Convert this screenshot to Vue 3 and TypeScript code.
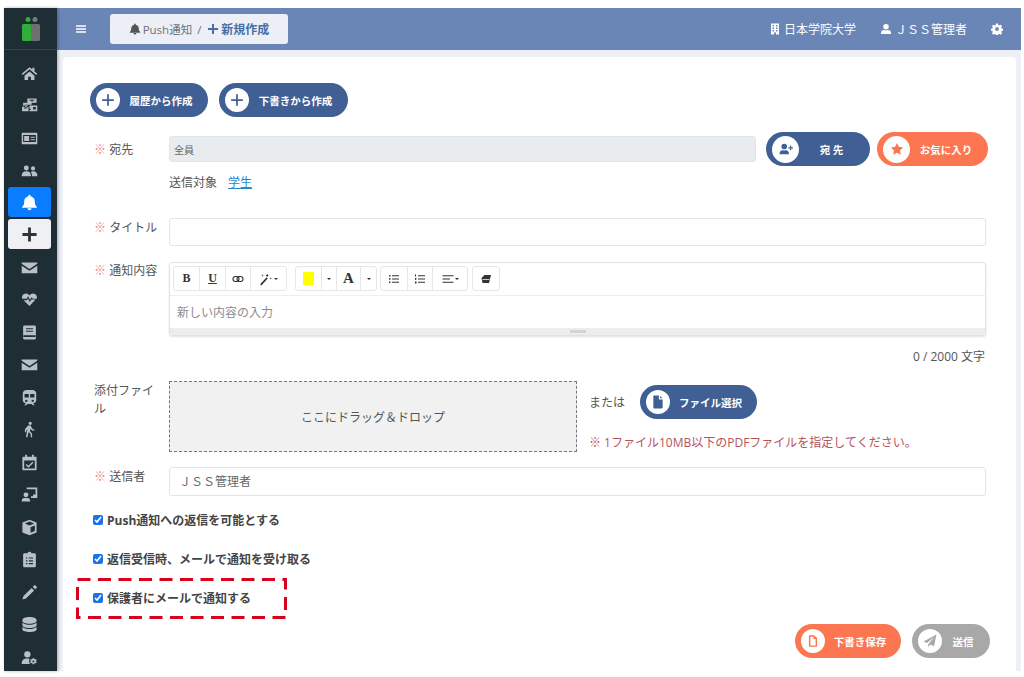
<script setup lang="ts">
const I: Record<string, string> = {
  home: 'M12 3 1 12.5l1.4 1.7L12 6l9.6 8.2 1.4-1.7-4-3.4V4h-3v2.5zM5 15v6h5v-4.5h4V21h5v-6l-7-6z',
  bulk: 'M9 2h13v6H9zM11 4l4.500 2.500L20 4zM3 8h12v3H6v4H3zM2 12h8l-4 3zM1.500 13.500 6 17l4.500-3.500V20h-9zM12 12h11v8H12v-2h2v-1.500h-2zM17 14v3.500h4V14z',
  card: 'M2 4h20a1 1 0 0 1 1 1v14a1 1 0 0 1-1 1H2a1 1 0 0 1-1-1V5a1 1 0 0 1 1-1zm1 3v10h18V7zm1.500 1.500h7v7h-7zm9 1h6V11h-6zm0 3.500h6v1.500h-6z',
  users: 'M7.500 5a3.500 3.500 0 1 1 0 7 3.500 3.500 0 0 1 0-7zM17 6a3 3 0 1 1 0 6 3 3 0 0 1 0-6zM1 19c0-4 2.500-6 6.500-6s6.500 2 6.500 6v1H1zM15.500 20v-1c0-2-.6-3.700-1.800-5 1-.6 2-.9 3.300-.9 3.700 0 6 1.900 6 5.400V20z',
  mail: 'M1 5h22v1.800L12 14 1 6.800zM1 9.500l11 7 11-7V20H1z',
  heart: 'M12 21 3.500 13h4.800l1.500-2.500 2.600 5 2.300-3.500h5.800zM1.800 11C.5 7.500 3 3.500 7 3.500c2 0 3.800 1 5 2.800 1.200-1.800 3-2.800 5-2.800 4 0 6.500 4 5.200 7.500h-5.500l-1.500-2.200-2.500 3.700-2.700-5L8 11z',
  book: 'M5 2h14a2 2 0 0 1 2 2v16a2 2 0 0 1-2 2H5a2 2 0 0 1-2-2V4a2 2 0 0 1 2-2zm2 4v1.500h10V6zm0 3.500V11h10V9.500zM3.500 16v2.500h17V16z',
  subway: 'M8 1.500h8c3 0 5.500 2 5.500 4.500v10c0 2.300-2 4-4.500 4.300l2.500 2.700h-3L15 21H9l-1.500 2h-3L7 20.300C4.500 20 2.500 18.300 2.500 16V6c0-2.500 2.500-4.500 5.500-4.500zM5 7v5h6V7zm8 0v5h6V7zM7.500 15a1.700 1.700 0 1 0 0 3.400 1.700 1.700 0 0 0 0-3.400zm9 0a1.700 1.700 0 1 0 0 3.400 1.700 1.700 0 0 0 0-3.400z',
  walk: 'M13 1a2.300 2.300 0 1 1 0 4.600A2.300 2.300 0 0 1 13 1zM10 6.500h3.500l2.500 4.500 3 1.500-.9 1.700-3.600-1.700-1-1.700-.8 3.700 3 3.500V23h-2v-4.500l-3-3L9 23H7l2-11-1.500.9V16h-2v-4.300z',
  cal: 'M6 1h2.500v3h7V1H18v3h3a1 1 0 0 1 1 1v17a1 1 0 0 1-1 1H3a1 1 0 0 1-1-1V5a1 1 0 0 1 1-1h3zM4.500 9v11.500h15V9zM16 11l1.500 1.500-7 7-4-4L8 14l2.500 2.500z',
  teach: 'M8 2h15v15h-9v-2.500h3V12h3.500V4.500H8zM7 9a3.500 3.500 0 1 1 0 7 3.500 3.500 0 0 1 0-7zM1 22c0-3.500 1.500-5 3.500-5h5c2 0 3.500 1.500 3.500 5z',
  cube: 'M12 1 22 5v14l-10 4-10-4V5zM5.500 6.300 12 9l6.500-2.700L12 3.700zM13.500 11.500v8l6-2.400v-8z',
  clip: 'M12 1a3 3 0 0 1 2.800 2H19a2 2 0 0 1 2 2v16a2 2 0 0 1-2 2H5a2 2 0 0 1-2-2V5a2 2 0 0 1 2-2h4.200A3 3 0 0 1 12 1zM7 9v1.700h2V9zm4 0v1.700h6V9zm-4 4v1.700h2V13zm4 0v1.700h6V13zm-4 4v1.700h2V17zm4 0v1.700h6V17z',
  pencil: 'M15 5.500 18.500 9 7 20.500 2 22l1.500-5zM16.500 4l2-2a1.500 1.500 0 0 1 2 0l1.500 1.500a1.500 1.500 0 0 1 0 2l-2 2z',
  db: 'M12 1.500c5.500 0 10 1.700 10 4v1.500c0 2.300-4.500 4-10 4S2 9.300 2 7V5.500c0-2.300 4.500-4 10-4zM2 9.500c2 1.800 6 3 10 3s8-1.200 10-3V13c0 2.300-4.500 4-10 4S2 15.300 2 13zM2 15.500c2 1.800 6 3 10 3s8-1.200 10-3V19c0 2.300-4.500 3.500-10 3.500S2 21.300 2 19z',
  ucog: 'M9 3a4.500 4.500 0 1 1 0 9 4.500 4.500 0 0 1 0-9zM1 21c0-5 2.500-7.500 8-7.500 1.200 0 2.200.1 3 .4-.6 1.700-.6 5.400.6 7.100H2zM18.500 13l1 1.600 1.800-.3.9 1.500-1.200 1.400 1.200 1.400-.9 1.500-1.800-.3-1 1.700h-2l-.8-1.700-1.900.3-.9-1.500 1.200-1.400-1.200-1.400.9-1.500 1.900.3.800-1.600zm-1 3.400a1.400 1.400 0 1 0 0 2.800 1.400 1.400 0 0 0 0-2.800z',
  bell: 'M12 23a2.800 2.800 0 0 0 2.800-3H9.200A2.800 2.800 0 0 0 12 23zM13.500 3.300V2.500a1.500 1.500 0 0 0-3 0v.8C7 4 4.500 7 4.500 10.500c0 5-1.700 6.400-2.800 7.500-.9 1 0 1.500.8 1.500h19c.8 0 1.700-.5.800-1.500-1.100-1.100-2.800-2.500-2.800-7.500 0-3.500-2.500-6.500-6-7.200z',
  plus: 'M10 2h4v8h8v4h-8v8h-4v-8H2v-4h8z',
  plusThin: 'M10.500 2h3v8.500H22v3h-8.500V22h-3v-8.500H2v-3h8.500z',
  bars: 'M2 4.500h20v3.200H2zM2 10.400h20v3.200H2zM2 16.300h20v3.200H2z',
  building: 'M4 1h16v22h-6v-4h-4v4H4zM7 4v3h3V4zm7 0v3h3V4zM7 9v3h3V9zm7 0v3h3V9zM7 14v3h3v-3zm7 0v3h3v-3z',
  user: 'M12 2a5.500 5.500 0 1 1 0 11 5.500 5.500 0 0 1 0-11zM2 22v-2c0-3.500 2.500-6 5.500-6h1c1 .6 2.200 1 3.500 1s2.500-.4 3.500-1h1c3 0 5.500 2.500 5.500 6v2z',
  cog: 'M10 1h4l.6 3 2 .9 2.700-1.600 2.800 2.800-1.700 2.600.9 2.100 3 .6v4l-3 .6-.9 2.100 1.700 2.600-2.800 2.800-2.700-1.700-2 .9-.6 3h-4l-.6-3-2-.9-2.700 1.700-2.800-2.800 1.700-2.600-.9-2.100-3-.6v-4l3-.6.9-2.100-1.700-2.600L4.700 3.300l2.700 1.600 2-.9zM12 8.200a3.800 3.800 0 1 0 0 7.600 3.800 3.800 0 0 0 0-7.600z',
  uplus: 'M9 3a4.800 4.800 0 1 1 0 9.600A4.800 4.800 0 0 1 9 3zM1 21v-1.500c0-3 2.200-5.500 5-5.500h.7c.7.400 1.500.6 2.300.6s1.600-.2 2.300-.6h.7c2.800 0 5 2.500 5 5.500V21zM19 6h2v3h3v2h-3v3h-2v-3h-3V9h3z',
  star: 'M12 1.500l3.200 6.800 7.300 1-5.300 5.100 1.300 7.400L12 18.300l-6.500 3.500 1.300-7.400L1.500 9.300l7.300-1z',
  file: 'M5 1h8.500v6.500H20V21a2 2 0 0 1-2 2H5a1 1 0 0 1-1-1V2a1 1 0 0 1 1-1zM15.500 1.500 19.500 5.500h-4z',
  fileo: 'M6 2h8l5 5v14a1 1 0 0 1-1 1H6a1 1 0 0 1-1-1V3a1 1 0 0 1 1-1zm1.500 2.500v15h9v-11H13V4.500z',
  send: 'M23 1 19 21l-6.500-3L9 22.500V17.500L19 5.500 6.500 15.500 1 13z',
}
const navTop = ['home', 'bulk', 'card', 'users']
const navBottom = ['mail', 'heart', 'book', 'mail', 'subway', 'walk', 'cal', 'teach', 'cube', 'clip', 'pencil', 'db', 'ucog']
const checks = ['Push通知への返信を可能とする', '返信受信時、メールで通知を受け取る']
</script>

<template>
  <div class="page">
    <aside class="side">
      <div class="logo">
        <svg width="18" height="24" viewBox="0 0 18 24">
          <circle cx="6" cy="2.500" r="2.500" fill="#2fae3c" />
          <circle cx="13" cy="2.500" r="2.500" fill="#7a7a7a" />
          <rect x="0" y="7" width="10" height="17" rx="1.500" fill="#2fae3c" />
          <rect x="9" y="7" width="9" height="17" rx="1.500" fill="#6f6f6f" />
        </svg>
      </div>
      <nav class="nav">
        <div v-for="(n, i) in navTop" :key="'t' + i" class="nav-item">
          <svg class="ni" viewBox="0 0 24 24"><path :d="I[n]" fill-rule="evenodd" /></svg>
        </div>
        <div class="nav-item active">
          <svg class="ni" viewBox="0 0 24 24"><path :d="I.bell" /></svg>
        </div>
        <div class="nav-item current">
          <svg class="ni" viewBox="0 0 24 24"><path :d="I.plus" /></svg>
        </div>
        <div v-for="(n, i) in navBottom" :key="'b' + i" class="nav-item">
          <svg class="ni" viewBox="0 0 24 24"><path :d="I[n]" fill-rule="evenodd" /></svg>
        </div>
      </nav>
    </aside>

    <div class="main">
      <header class="top">
        <svg class="bars" viewBox="0 0 24 24"><path :d="I.bars" /></svg>
        <div class="crumb">
          <svg class="ci" viewBox="0 0 24 24"><path :d="I.bell" /></svg>
          <span>Push通知</span>
          <span class="slash">/</span>
          <svg class="ci blue" viewBox="0 0 24 24"><path :d="I.plus" /></svg>
          <b>新規作成</b>
        </div>
        <div class="top-right">
          <span class="ti"><svg viewBox="0 0 24 24"><path :d="I.building" fill-rule="evenodd" /></svg>日本学院大学</span>
          <span class="ti admin"><svg viewBox="0 0 24 24"><path :d="I.user" /></svg>ＪＳＳ管理者</span>
          <svg class="cog" viewBox="0 0 24 24"><path :d="I.cog" fill-rule="evenodd" /></svg>
        </div>
      </header>

      <main class="card">
        <div class="create-row">
          <button class="pill navy w118"><i class="dot"><svg viewBox="0 0 24 24"><path :d="I.plusThin" /></svg></i><span>履歴から作成</span></button>
          <button class="pill navy w129"><i class="dot"><svg viewBox="0 0 24 24"><path :d="I.plusThin" /></svg></i><span>下書きから作成</span></button>
        </div>

        <div class="row r-dest">
          <label class="lb"><em>※</em> 宛先</label>
          <div class="input disabled">全員</div>
          <button class="pill navy w104 wide"><i class="dot"><svg viewBox="0 0 24 24"><path :d="I.uplus" /></svg></i><span>宛 先</span></button>
          <button class="pill orange w111 wide"><i class="dot"><svg viewBox="0 0 24 24"><path :d="I.star" /></svg></i><span>お気に入り</span></button>
        </div>
        <div class="target">送信対象<a>学生</a></div>

        <div class="row r-title">
          <label class="lb"><em>※</em> タイトル</label>
          <div class="input tall"></div>
        </div>

        <div class="row r-body">
          <label class="lb"><em>※</em> 通知内容</label>
          <div class="editor">
            <div class="toolbar">
              <div class="grp">
                <span class="tb w25 serif">B</span>
                <span class="tb w26 serif u">U</span>
                <span class="tb w25">
                  <svg class="ti12" viewBox="0 0 24 24" fill="none" stroke="#333" stroke-width="2.200"><rect x="2" y="7" width="12" height="10" rx="5" /><rect x="10" y="7" width="12" height="10" rx="5" /></svg>
                </span>
                <span class="tb w36">
                  <svg class="ti14" viewBox="0 0 24 24"><path d="M2 21 13 9l2 2L4 23zM14 3l1 2 2 1-2 1-1 2-1-2-2-1 2-1zM20 9l.7 1.500 1.300.5-1.300.5L20 13l-.7-1.500L18 11l1.300-.5zM6 4l.7 1.500L8 6l-1.300.5L6 8l-.7-1.500L4 6l1.300-.5z" fill="#333" /></svg><i class="caret"></i>
                </span>
              </div>
              <div class="grp">
                <span class="tb w25"><i class="swatch"></i></span>
                <span class="tb w15"><i class="caret"></i></span>
                <span class="tb w24 serif big">A</span>
                <span class="tb w16"><i class="caret"></i></span>
              </div>
              <div class="grp g3">
                <span class="tb w26"><svg class="ti12" viewBox="0 0 24 24"><path d="M2 4h3v3H2zM8 4.500h14v2H8zM2 10.500h3v3H2zM8 11h14v2H8zM2 17h3v3H2zM8 17.500h14v2H8z" fill="#333" /></svg></span>
                <span class="tb w25"><svg class="ti12" viewBox="0 0 24 24"><path d="M2 3h2v4H2zM2 10h3v1.500H3.500V13H5v1H2zM2 17h3v4H2zM8 4.500h14v2H8zM8 11h14v2H8zM8 17.500h14v2H8z" fill="#333" /></svg></span>
                <span class="tb w35"><svg class="ti12" viewBox="0 0 24 24"><path d="M1 4.500h22v2.200H1zM1 11h15v2.200H1zM1 17.500h22v2.200H1z" fill="#333" /></svg><i class="caret"></i></span>
              </div>
              <div class="grp g4">
                <span class="tb w26"><svg class="ti12" viewBox="0 0 24 24"><path d="M9 4h13l-4 16H5L3 10z" fill="#333" /><path d="M5 13h14" stroke="#fff" stroke-width="1.500" /></svg></span>
              </div>
            </div>
            <div class="ph">新しい内容の入力</div>
            <div class="resize"><i></i></div>
          </div>
        </div>
        <div class="count">0 / 2000 文字</div>

        <div class="row r-file">
          <label class="lb attach">添付ファイル</label>
          <div class="drop">ここにドラッグ＆ドロップ</div>
          <div class="file-side">
            <div class="file-pick">
              <span class="or">または</span>
              <button class="pill navy w117"><i class="dot"><svg viewBox="0 0 24 24"><path :d="I.file" fill-rule="evenodd" /></svg></i><span>ファイル選択</span></button>
            </div>
            <p class="warn">※ 1ファイル10MB以下のPDFファイルを指定してください。</p>
          </div>
        </div>

        <div class="row r-sender">
          <label class="lb"><em>※</em> 送信者</label>
          <div class="input tall val">ＪＳＳ管理者</div>
        </div>

        <label v-for="c in checks" :key="c" class="chk"><input type="checkbox" checked />{{ c }}</label>
        <label class="chk marked">
          <input type="checkbox" checked />保護者にメールで通知する
          <svg class="mark" width="212" height="41" viewBox="0 0 212 41" fill="none">
            <rect x="1.500" y="1.500" width="208" height="38" stroke="#d9001b" stroke-width="3" stroke-dasharray="13 7.500" />
          </svg>
        </label>

        <div class="actions">
          <button class="pill orange w106"><i class="dot"><svg viewBox="0 0 24 24"><path :d="I.fileo" fill-rule="evenodd" /></svg></i><span>下書き保存</span></button>
          <button class="pill gray w78"><i class="dot"><svg viewBox="0 0 24 24"><path :d="I.send" /></svg></i><span>送信</span></button>
        </div>
      </main>
    </div>
  </div>
</template>

<style>
html, body { margin: 0; background: #fff; }
</style>

<style scoped>
.page {
  box-sizing: border-box;
  width: 1024px;
  height: 677px;
  padding: 8px 3px 6px 4px;
  display: flex;
  overflow: hidden;
  font-family: "Open Sans", "Noto Sans CJK JP", sans-serif;
  color: #555;
}
.side {
  width: 53px;
  flex: none;
  background: #1f2d34;
  display: flex;
  flex-direction: column;
  box-shadow: 1px 0 3px rgba(0, 0, 0, .3);
  position: relative;
  overflow: hidden;
}
.logo {
  height: 42px;
  flex: none;
  border-bottom: 1px solid #33424a;
  box-sizing: border-box;
  display: flex;
  align-items: center;
  justify-content: center;
}
.nav {
  flex: none;
  padding: 7px 0 0 4px;
  display: flex;
  flex-direction: column;
}
.nav-item {
  width: 43px;
  height: 32.500px;
  flex: none;
  display: flex;
  align-items: center;
  justify-content: center;
  color: #b9c0c4;
}
.ni { width: 17px; height: 17px; fill: currentColor; }
.nav-item.active {
  background: #0a7cff;
  color: #fff;
  border-radius: 3px;
  height: 30px;
  margin-bottom: 2px;
}
.nav-item.current {
  background: #eef0f3;
  color: #333;
  border-radius: 3px;
  height: 30px;
  margin-bottom: 2px;
}
.main {
  flex: 1;
  min-width: 0;
  background: #edf0f7;
  display: flex;
  flex-direction: column;
}
.top {
  height: 42px;
  flex: none;
  background: #6a86b6;
  display: flex;
  align-items: center;
  padding: 0 18px 0 18px;
  color: #fff;
}
.bars { width: 12px; height: 12px; fill: #fff; }
.crumb {
  margin-left: 23px;
  width: 178px;
  height: 30px;
  box-sizing: border-box;
  background: #eceff5;
  border-radius: 3px;
  display: flex;
  align-items: center;
  justify-content: center;
  font-size: 11.500px;
  color: #6b7480;
  gap: 2px;
}
.crumb b { color: #4a6fa5; font-weight: 700; font-size: 12px; }
.slash { margin: 0 4px 0 3px; }
.ci { width: 12px; height: 12px; fill: #555; }
.ci.blue { fill: #4a6fa5; }
.top-right {
  margin-left: auto;
  display: flex;
  align-items: center;
  font-size: 12px;
}
.ti { display: flex; align-items: center; gap: 3px; }
.ti svg { width: 12px; height: 12px; fill: #fff; }
.admin { margin-left: 24px; gap: 3px; }
.cog { width: 12px; height: 12px; fill: #fff; margin-left: 24px; }
.card {
  flex: 1;
  margin: 7px 5px 0 6px;
  background: #fff;
  border-radius: 4px 4px 0 0;
  padding: 26px 30px 0 27px;
  min-height: 0;
}
.create-row { display: flex; gap: 11px; }
.pill {
  height: 34px;
  flex: none;
  border: 0;
  border-radius: 17px;
  padding: 0 0 0 6px;
  display: flex;
  align-items: center;
  color: #fff;
  font: 700 10.500px "Noto Sans CJK JP", sans-serif;
}
.pill span { flex: 1; text-align: center; padding-right: 6px; }
.navy { background: #3f5f95; }
.orange { background: #fc7651; }
.gray { background: #a8a8a8; }
.w118 { width: 118px; } .w129 { width: 129px; }
.w104 { width: 104px; } .w111 { width: 111px; }
.w117 { width: 117px; } .w106 { width: 106px; } .w78 { width: 78px; }
.dot {
  width: 24px;
  height: 24px;
  flex: none;
  border-radius: 50%;
  background: #fff;
  display: flex;
  align-items: center;
  justify-content: center;
}
.wide .dot { width: 27px; height: 27px; }
.dot svg { width: 14px; height: 14px; }
.navy .dot svg { fill: #3f5f95; }
.orange .dot svg { fill: #fc7651; }
.gray .dot svg { fill: #a8a8a8; }
.row { display: flex; align-items: flex-start; }
.lb {
  width: 75px;
  margin-left: 4px;
  flex: none;
  font-size: 12px;
  line-height: 18px;
  color: #555;
}
.lb em { font-style: normal; color: #e8877c; }
.r-dest { margin-top: 15px; height: 34px; }
.r-dest .lb { padding-top: 9px; }
.input {
  box-sizing: border-box;
  flex: 1;
  border: 1px solid #e1e5ea;
  border-radius: 3px;
  background: #fff;
  font-size: 10px;
  color: #666;
  display: flex;
  align-items: center;
  padding-left: 4px;
}
.disabled {
  height: 26px;
  margin: 4px 10px 0 0;
  background: #e9ecef;
}
.r-dest .pill + .pill { margin-left: 7px; }
.r-dest .orange { margin-right: -2px; }
.target { margin: 8px 0 0 79px; font-size: 12px; line-height: 18px; color: #555; }
.target a { margin-left: 11px; color: #2a86c8; text-decoration: underline; }
.r-title { margin-top: 26px; }
.r-title .lb, .r-sender .lb { padding-top: 1px; }
.tall { height: 28px; }
.r-body { margin-top: 16px; }
.editor {
  flex: 1;
  height: 74px;
  box-sizing: border-box;
  border: 1px solid #dfe3e8;
  border-radius: 3px;
  box-shadow: 0 1px 2px rgba(0, 0, 0, .12);
  display: flex;
  flex-direction: column;
  overflow: hidden;
}
.toolbar {
  height: 33px;
  box-sizing: border-box;
  flex: none;
  padding: 3px 0 0 3px;
  border-bottom: 1px solid #eee;
  display: flex;
  gap: 8px;
}
.grp {
  height: 25px;
  display: flex;
  border: 1px solid #e4e6e9;
  border-radius: 3px;
  box-sizing: border-box;
}
.g3 { margin-left: -5px; }
.g4 { margin-left: -4px; }
.tb {
  box-sizing: border-box;
  height: 23px;
  display: flex;
  align-items: center;
  justify-content: center;
  gap: 1px;
  border-left: 1px solid #e4e6e9;
  color: #333;
  font-size: 12px;
}
.tb:first-child { border-left: 0; }
.w26 { width: 26px; } .w25 { width: 25px; } .w35 { width: 35px; } .w36 { width: 36px; }
.w15 { width: 15px; } .w24 { width: 24px; } .w16 { width: 16px; }
.serif { font-family: "Liberation Serif", serif; font-weight: 700; }
.u { text-decoration: underline; }
.big { font-size: 15px; }
.ti12 { width: 12px; height: 12px; }
.ti14 { width: 14px; height: 14px; }
.caret {
  width: 0;
  height: 0;
  border: 2.500px solid transparent;
  border-top-color: #333;
  border-bottom: 0;
}
.swatch { width: 11px; height: 13px; background: #ff0; }
.ph {
  flex: 1;
  padding: 8px 0 0 7px;
  font-size: 12px;
  line-height: 18px;
  color: #8c8c8c;
}
.resize {
  height: 7px;
  flex: none;
  background: #eceded;
  display: flex;
  align-items: center;
  justify-content: center;
}
.resize i { width: 16px; height: 3px; background: #d4d4d4; }
.count {
  margin: 12px 1px 0 0;
  text-align: right;
  font-size: 12px;
  line-height: 18px;
  color: #555;
}
.r-file { margin-top: 15px; }
.attach { width: 64px; margin-right: 11px; padding-top: 1px; }
.drop {
  box-sizing: border-box;
  width: 408px;
  height: 71px;
  flex: none;
  border: 1px dashed #777;
  background: #f1f1f1;
  display: flex;
  align-items: center;
  justify-content: center;
  font-size: 12px;
  color: #555;
}
.file-side { margin-left: 12px; }
.file-pick { display: flex; align-items: center; margin-top: 4px; }
.or { width: 51px; font-size: 12px; }
.warn { margin: 15px 0 0; font-size: 12px; line-height: 18px; color: #b8525a; }
.r-sender { margin-top: 15px; }
.val { font-size: 12px; padding-left: 9px; height: 29px; padding-bottom: 1px; }
.chk {
  display: flex;
  align-items: center;
  width: max-content;
  height: 18px;
  margin: 15px 0 0 3px;
  font-size: 12px;
  font-weight: 700;
  color: #444;
}
.r-sender + .chk { margin-top: 15px; }
.chk + .chk { margin-top: 21px; }
.chk input {
  width: 10px;
  height: 10px;
  margin: 0 4px 0 0;
  accent-color: #1a73e8;
}
.marked { position: relative; }
.mark { position: absolute; left: -17px; top: -11px; pointer-events: none; }
.actions {
  display: flex;
  justify-content: flex-end;
  gap: 11px;
  margin: 17px -4px 0 0;
}
</style>
